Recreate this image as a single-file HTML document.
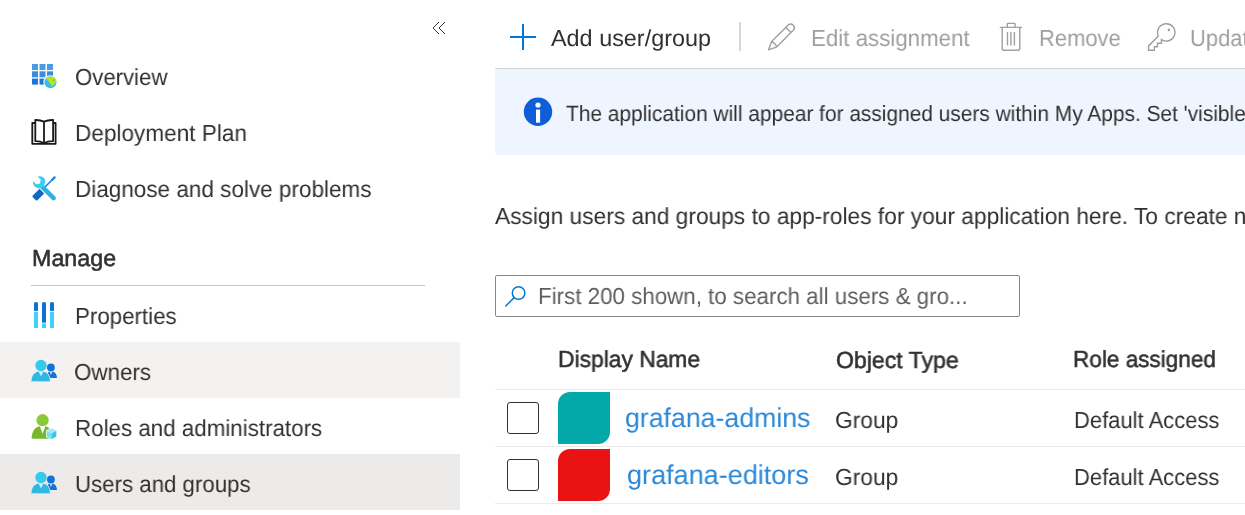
<!DOCTYPE html>
<html><head><meta charset="utf-8">
<style>
*{margin:0;padding:0;box-sizing:border-box}
html,body{width:1245px;height:515px;overflow:hidden;background:#fff}
body{font-family:"Liberation Sans",sans-serif;color:#323130;position:relative}
.t{position:absolute;white-space:nowrap;line-height:30px;transform-origin:0 0;text-rendering:geometricPrecision;will-change:transform}
.ab{position:absolute}
svg{position:absolute;overflow:visible}
</style></head><body>


<!-- sidebar backgrounds -->
<div class="ab" style="left:0;top:342px;width:460px;height:56px;background:#f3f2f1"></div>
<div class="ab" style="left:0;top:454px;width:460px;height:56px;background:#edebe9"></div>
<div class="ab" style="left:31px;top:285px;width:394px;height:1px;background:#c8c6c4"></div>

<!-- collapse chevrons -->
<svg style="left:0;top:0" width="1" height="1"><path d="M439 22 L433 28 L439 34 M445 22 L439 28 L445 34" fill="none" stroke="#323130" stroke-width="1"/></svg>

<!-- sidebar text -->

<!-- toolbar -->
<div class="ab" style="left:495px;top:68px;width:750px;height:1px;background:#d2d2d2"></div>
<svg style="left:0;top:0" width="1" height="1"><path d="M510 37 H536 M523 24 V50" stroke="#0078d4" stroke-width="2"/></svg>
<div class="ab" style="left:739px;top:22px;width:2px;height:29px;background:#d6d6d6"></div>

<!-- banner -->
<div class="ab" style="left:495px;top:69px;width:760px;height:86px;background:#eef5fe;border-radius:3px"></div>


<!-- search -->
<div class="ab" style="left:495px;top:275px;width:525px;height:42px;border:1px solid #8a8886;border-radius:2px"></div>

<!-- table -->
<div class="ab" style="left:495px;top:389px;width:750px;height:1px;background:#edebe9"></div>
<div class="ab" style="left:495px;top:446px;width:750px;height:1px;background:#edebe9"></div>
<div class="ab" style="left:495px;top:503px;width:750px;height:1px;background:#edebe9"></div>

<div class="ab" style="left:507px;top:402px;width:32px;height:32px;border:1.5px solid #323130;border-radius:3px"></div>
<div class="ab" style="left:507px;top:459px;width:32px;height:32px;border:1.5px solid #323130;border-radius:3px"></div>
<div class="ab" style="left:558px;top:392px;width:52px;height:52px;background:#03a9a9;border-radius:12px 0 12px 0"></div>
<div class="ab" style="left:558px;top:449px;width:52px;height:52px;background:#ea1313;border-radius:12px 0 12px 0"></div>


<!-- ICONS -->
<svg style="left:0;top:0" width="1" height="1">
 <!-- overview grid -->
 <g>
  <rect x="32" y="64" width="6" height="6" fill="#4a9ae6"/><rect x="39.5" y="64" width="6" height="6" fill="#4a9ae6"/><rect x="47" y="64" width="6" height="6" fill="#4a9ae6"/>
  <rect x="32" y="71.3" width="6" height="6" fill="#3a8ce0"/><rect x="39.5" y="71.3" width="6" height="6" fill="#3a8ce0"/><rect x="47" y="71.3" width="6" height="6" fill="#3a8ce0"/>
  <rect x="32" y="78.6" width="6" height="6" fill="#1e75d7"/><rect x="39.5" y="78.6" width="6" height="6" fill="#1e75d7"/>
  <circle cx="50.4" cy="82.2" r="7" fill="#fff"/>
  <circle cx="50.4" cy="82.2" r="6" fill="#35bdf0"/>
  <path d="M46.2 77.6 Q48.5 76.3 51.5 76.4 Q54.8 77 56.2 79.6 L56.4 82.6 L54.6 83.6 L53.4 85.6 L52 86.8 L50.8 84.6 L49.6 82.4 L47.8 80.6 L46.4 79 Z" fill="#b6e41d"/>
  <circle cx="53.9" cy="80.1" r="0.9" fill="#35bdf0"/>
 </g>
 <!-- book -->
 <g fill="none" stroke="#1b1a19" stroke-width="1.8" stroke-linejoin="round">
  <path d="M35.3 123 H32.3 V143.8 H55.6 V123 H53.1"/>
  <path d="M35.3 120 Q40 119.8 44 121.6 Q48 119.8 53.1 120 V141.2 Q48 141 44 143.3 Q40 141 35.3 141.2 Z M44 121.6 V143.3"/>
 </g>
 <!-- wrench / screwdriver -->
 <g>
  <path d="M45 187 L53 179" stroke="#1c84d6" stroke-width="1.6" stroke-linecap="round"/>
  <path d="M52.2 179.8 L54.6 177.4" stroke="#1c84d6" stroke-width="2.3" stroke-linecap="round"/>
  <path d="M32.8 195.6 L39.6 188.8 L44.2 193.4 L37.4 200.2 Q36.6 201 35.8 200.2 L32.8 197.2 Q32 196.4 32.8 195.6 Z" fill="#1169c6"/>
  <path d="M42.3 186.8 L53.6 198.1" stroke="#2cb2e2" stroke-width="4.6" stroke-linecap="round"/>
  <path d="M37.6 176.6 Q42.5 175.2 44.9 179.3 Q46.2 182.4 44.2 185.3 L43.2 186.6 L40.2 188.2 Q35.3 188.6 33.3 184.2 Q32.9 182.8 33.1 181.3 L36.3 184.3 L39.9 183.4 L40.8 179.8 Z" fill="#3ccdf3"/>
 </g>
 <!-- properties -->
 <g>
  <path d="M34 328 V304 Q34 302 36 302 Q38 302 38 304 V328 Z" fill="#3fd1f6"/>
  <path d="M34 311.6 V304 Q34 302 36 302 Q38 302 38 304 V310.8 Z" fill="#0f6fd7"/>
  <path d="M42 328 V304 Q42 302 44 302 Q46 302 46 304 V328 Z" fill="#3fd1f6"/>
  <path d="M42 323.4 V304 Q42 302 44 302 Q46 302 46 304 V322.6 Z" fill="#0f6fd7"/>
  <path d="M50 328 V304 Q50 302 52 302 Q54 302 54 304 V328 Z" fill="#3fd1f6"/>
  <path d="M50 311.6 V304 Q50 302 52 302 Q54 302 54 304 V310.8 Z" fill="#0f6fd7"/>
  <rect x="33" y="310.9" width="6" height="1" fill="#f0f0f0"/><rect x="49" y="310.9" width="6" height="1" fill="#f0f0f0"/><rect x="41" y="322.7" width="6" height="1" fill="#f0f0f0"/>
 </g>
</svg>

<svg style="left:0;top:0" width="1" height="1">
 <!-- owners -->
 <g transform="translate(0,354)">
   <circle cx="50.9" cy="13.4" r="3.9" fill="#1272d6"/>
   <path d="M46.2 24 Q46.8 17.2 51 17.2 Q56.6 17.2 57 24 Z" fill="#1272d6"/>
   <path d="M49.6 17.5 L51 21 L52.4 17.5 Z" fill="#cfe9f8"/>
   <path d="M30.8 27.8 Q31.5 17 41 16.8 Q50.2 17 50.5 27.8 Z" fill="#2eb8e2" stroke="#f3f2f1" stroke-width="0.8"/>
   <circle cx="41" cy="11.5" r="5.7" fill="#34c9ef"/>
   <path d="M38.5 17.2 L41 22.5 L43.5 17.2 Z" fill="#d5f1fb"/>
 </g>
 <!-- users -->
 <g transform="translate(0,466)">
   <circle cx="50.9" cy="13.4" r="3.9" fill="#1272d6"/>
   <path d="M46.2 24 Q46.8 17.2 51 17.2 Q56.6 17.2 57 24 Z" fill="#1272d6"/>
   <path d="M49.6 17.5 L51 21 L52.4 17.5 Z" fill="#cfe9f8"/>
   <path d="M30.8 27.8 Q31.5 17 41 16.8 Q50.2 17 50.5 27.8 Z" fill="#2eb8e2" stroke="#edebe9" stroke-width="0.8"/>
   <circle cx="41" cy="11.5" r="5.7" fill="#34c9ef"/>
   <path d="M38.5 17.2 L41 22.5 L43.5 17.2 Z" fill="#d5f1fb"/>
 </g>
 <!-- roles -->
 <g>
   <path d="M31.6 438.8 Q32 426 42.6 425.8 Q49 426 50 430 L50 438.8 Z" fill="#78b82c"/>
   <circle cx="42.6" cy="420.2" r="6.1" fill="#8bc83a"/>
   <path d="M39.6 426 L42.6 433.5 L45.6 426 Z" fill="#fff"/>
   <path d="M46 430.5 L51.5 427.5 L57 430.5 V437 L51.5 440 L46 437 Z" fill="#fff"/>
   <path d="M46.6 430.8 L51.5 428.2 L56.4 430.8 L51.5 433.4 Z" fill="#a6e8f8"/>
   <path d="M46.6 430.8 L51.5 433.4 V439.2 L46.6 436.6 Z" fill="#7ddcf6"/>
   <path d="M56.4 430.8 L51.5 433.4 V439.2 L56.4 436.6 Z" fill="#3cc4ec"/>
 </g>
 <!-- pencil -->
 <path d="M768.6 49.8 L771.6 41.5 L788.3 24.9 A3.7 3.7 0 0 1 793.5 30.1 L776.9 46.8 Z M771.6 41.5 Q775.3 43.1 776.9 46.8 M785.8 27.4 L791.0 32.6" fill="none" stroke="#a19f9d" stroke-width="1.4" stroke-linejoin="round"/>
 <!-- trash -->
 <path d="M999.8 27.4 H1022 M1007.3 27.4 V24 Q1007.3 23.4 1008 23.4 H1014.3 Q1015 23.4 1015 24 V27.4 M1002.2 27.4 V48.4 Q1002.2 50.2 1004 50.2 H1018 Q1019.8 50.2 1019.8 48.4 V27.4 M1007.5 32 V45.5 M1010.9 32 V45.5 M1014.4 32 V45.5" fill="none" stroke="#a19f9d" stroke-width="1.4"/>
 <!-- key -->
 <path d="M1158.4 36.1 L1148.6 45.9 V50.2 H1154.4 V46.8 H1157.5 V43.3 H1161.4 V39.6 A8.7 8.7 0 1 0 1158.4 36.1 Z" fill="none" stroke="#a19f9d" stroke-width="1.4" stroke-linejoin="miter"/>
 <circle cx="1168.9" cy="29.9" r="1.3" fill="#a19f9d"/>
 <!-- search -->
 <circle cx="518.6" cy="293" r="6.3" fill="none" stroke="#0078d4" stroke-width="1.5"/>
 <path d="M514.2 297.6 L505.8 306" stroke="#0078d4" stroke-width="1.5" stroke-linecap="round"/>
 <!-- info -->
 <circle cx="538" cy="111.8" r="14.2" fill="#0f5ed8"/>
 <circle cx="538" cy="105" r="2.6" fill="#fff"/>
 <rect x="536" y="109.6" width="4.1" height="13" fill="#fff"/>
</svg>

<div class="t" id="ov" style="left:74.53px;top:61.93px;font-size:23.2px;color:#323130;transform:scaleX(0.9560)">Overview</div>
<div class="t" id="dp" style="left:74.68px;top:117.85px;font-size:23.2px;color:#323130;transform:scaleX(0.9735)">Deployment Plan</div>
<div class="t" id="dg" style="left:74.69px;top:173.89px;font-size:23.2px;color:#323130;transform:scaleX(0.9705)">Diagnose and solve problems</div>
<div class="t" id="mg" style="left:31.66px;top:242.85px;font-size:23.2px;color:#323130;transform:scaleX(1.0033);-webkit-text-stroke:0.55px #323130">Manage</div>
<div class="t" id="pr" style="left:74.70px;top:301.15px;font-size:23.2px;color:#323130;transform:scaleX(0.9624)">Properties</div>
<div class="t" id="ow" style="left:74.03px;top:357.11px;font-size:23.2px;color:#323130;transform:scaleX(0.9648)">Owners</div>
<div class="t" id="ro" style="left:74.70px;top:413.15px;font-size:23.2px;color:#323130;transform:scaleX(0.9638)">Roles and administrators</div>
<div class="t" id="us" style="left:75.46px;top:469.15px;font-size:23.2px;color:#323130;transform:scaleX(0.9594)">Users and groups</div>
<div class="t" id="ad" style="left:551.20px;top:22.85px;font-size:23.2px;color:#323130;transform:scaleX(1.0090)">Add user/group</div>
<div class="t" id="ed" style="left:810.83px;top:23.46px;font-size:23.2px;color:#a19f9d;transform:scaleX(0.9611)">Edit assignment</div>
<div class="t" id="rm" style="left:1038.62px;top:23.26px;font-size:23.2px;color:#a19f9d;transform:scaleX(0.9459)">Remove</div>
<div class="t" id="up" style="left:1189.89px;top:22.73px;font-size:23.2px;color:#a19f9d;transform:scaleX(0.9459)">Update Credentials</div>
<div class="t" id="bn" style="left:565.66px;top:99.27px;font-size:22px;color:#323130;transform:scaleX(0.9495)">The application will appear for assigned users within My Apps. Set 'visible to users?' to no in properties to prevent this.</div>
<div class="t" id="as" style="left:494.84px;top:201.15px;font-size:23.2px;color:#323130;transform:scaleX(0.9804)">Assign users and groups to app-roles for your application here. To create new app-roles for this application, use the application registration.</div>
<div class="t" id="fs" style="left:537.67px;top:281.36px;font-size:23.2px;color:#605e5c;transform:scaleX(0.9635)">First 200 shown, to search all users &amp; gro...</div>
<div class="t" id="dn" style="left:557.89px;top:343.54px;font-size:23.2px;color:#323130;transform:scaleX(0.9844);-webkit-text-stroke:0.55px #323130">Display Name</div>
<div class="t" id="ot" style="left:836.34px;top:344.87px;font-size:23.2px;color:#323130;transform:scaleX(0.9948);-webkit-text-stroke:0.55px #323130">Object Type</div>
<div class="t" id="ra" style="left:1073.40px;top:344.05px;font-size:23.2px;color:#323130;transform:scaleX(0.9725);-webkit-text-stroke:0.55px #323130">Role assigned</div>
<div class="t" id="g1" style="left:625.36px;top:402.56px;font-size:27.2px;color:#2b88d8;transform:scaleX(0.9813)">grafana-admins</div>
<div class="t" id="gr1" style="left:835.42px;top:405.02px;font-size:23.2px;color:#323130;transform:scaleX(0.9815)">Group</div>
<div class="t" id="da1" style="left:1073.86px;top:405.15px;font-size:23.2px;color:#323130;transform:scaleX(0.9480)">Default Access</div>
<div class="t" id="g2" style="left:627.13px;top:460.11px;font-size:27.2px;color:#2b88d8;transform:scaleX(0.9946)">grafana-editors</div>
<div class="t" id="gr2" style="left:835.42px;top:462.02px;font-size:23.2px;color:#323130;transform:scaleX(0.9815)">Group</div>
<div class="t" id="da2" style="left:1073.86px;top:462.15px;font-size:23.2px;color:#323130;transform:scaleX(0.9480)">Default Access</div>
</body></html>
